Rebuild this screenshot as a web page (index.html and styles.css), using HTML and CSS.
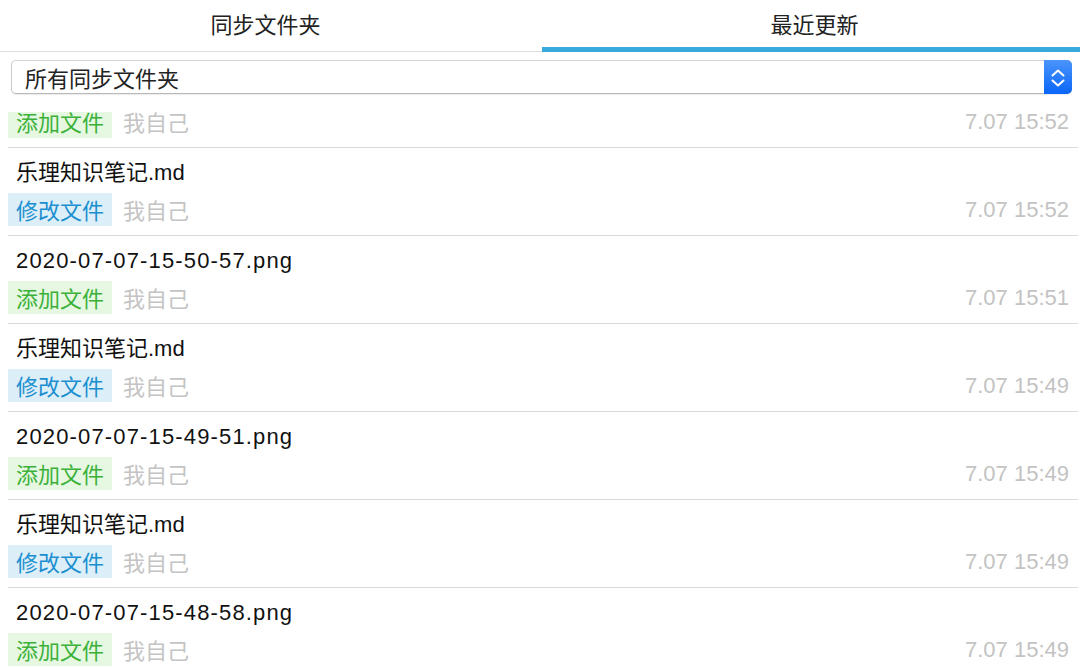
FILE: index.html
```html
<!DOCTYPE html>
<html lang="zh">
<head>
<meta charset="utf-8">
<title>最近更新</title>
<link rel="stylesheet" href="styles.css">
</head>
<body>
<div class="app">
  <div class="tabs">
    <div class="tab">同步文件夹</div>
    <div class="tab active">最近更新</div>
  </div>
  <div class="filter">
    <div class="select">
      <span class="select-label">所有同步文件夹</span>
      <span class="stepper">
        <svg width="28" height="33" viewBox="0 0 28 33">
          <path d="M8.5 14.5 L14 9.5 L19.5 14.5" fill="none" stroke="#fff" stroke-width="2" stroke-linecap="round" stroke-linejoin="round"/>
          <path d="M8.5 19.5 L14 24.5 L19.5 19.5" fill="none" stroke="#fff" stroke-width="2" stroke-linecap="round" stroke-linejoin="round"/>
        </svg>
      </span>
    </div>
  </div>
  <div class="list-viewport">
    <ul class="list">
      <li class="row">
        <div class="name latin">2020-07-07-15-52-10.png</div>
        <div class="meta"><span class="tag add">添加文件</span><span class="who">我自己</span><span class="time">7.07 15:52</span></div>
      </li>
      <li class="row">
        <div class="name">乐理知识笔记.md</div>
        <div class="meta"><span class="tag mod">修改文件</span><span class="who">我自己</span><span class="time">7.07 15:52</span></div>
      </li>
      <li class="row">
        <div class="name latin">2020-07-07-15-50-57.png</div>
        <div class="meta"><span class="tag add">添加文件</span><span class="who">我自己</span><span class="time">7.07 15:51</span></div>
      </li>
      <li class="row">
        <div class="name">乐理知识笔记.md</div>
        <div class="meta"><span class="tag mod">修改文件</span><span class="who">我自己</span><span class="time">7.07 15:49</span></div>
      </li>
      <li class="row">
        <div class="name latin">2020-07-07-15-49-51.png</div>
        <div class="meta"><span class="tag add">添加文件</span><span class="who">我自己</span><span class="time">7.07 15:49</span></div>
      </li>
      <li class="row">
        <div class="name">乐理知识笔记.md</div>
        <div class="meta"><span class="tag mod">修改文件</span><span class="who">我自己</span><span class="time">7.07 15:49</span></div>
      </li>
      <li class="row">
        <div class="name latin">2020-07-07-15-48-58.png</div>
        <div class="meta"><span class="tag add">添加文件</span><span class="who">我自己</span><span class="time">7.07 15:49</span></div>
      </li>
    </ul>
  </div>
</div>
</body>
</html>
```

FILE: styles.css
```css
* { box-sizing: border-box; }
html, body { margin: 0; padding: 0; background: #fff; }
body {
  font-family: "Liberation Sans", "Noto Sans CJK SC", sans-serif;
  color: #1a1a1a;
  width: 1080px;
  height: 667px;
  overflow: hidden;
}
.app { display: flex; flex-direction: column; height: 667px; }

.tab, .select-label, .tag, .who {
  font-family: "Noto Sans CJK SC", "Liberation Sans", sans-serif;
}

.tabs {
  display: grid;
  grid-template-columns: 542px 1fr;
  height: 52px;
  flex: none;
}
.tab {
  display: flex;
  align-items: center;
  justify-content: center;
  font-size: 22px;
  line-height: 30px;
  color: #222;
  padding-bottom: 6px;
  padding-right: 11px;
  border-bottom: 1px solid #dedede;
}
.tab.active {
  border-bottom: 5px solid #37a9da;
  padding-bottom: 2px;
  padding-right: 0;
  padding-left: 7px;
}

.filter { flex: none; padding: 8px 8px 18px 11px; height: 60px; }
.select {
  display: flex;
  align-items: stretch;
  height: 34px;
  border: 1px solid #cbcbcb;
  border-top-color: #d6d6d6;
  border-bottom-color: #b9b9b9;
  border-radius: 5px;
  background: #fff;
  box-shadow: 0 0.5px 1px rgba(0,0,0,0.08);
}
.select-label {
  flex: 1;
  display: flex;
  align-items: center;
  padding-left: 13px;
  font-size: 22px;
  line-height: 32px;
  color: #222;
}
.stepper {
  flex: none;
  width: 28px;
  margin: -1px -1px -1px 0;
  border-radius: 0 5px 5px 0;
  background: linear-gradient(#4a94fb, #0a66f8);
  display: flex;
  align-items: center;
  justify-content: center;
}
.stepper svg { display: block; }

.list-viewport { flex: 1; overflow: hidden; }
.list { list-style: none; margin: -52px 2px 0 8px; padding: 0; }
.row {
  height: 88px;
  padding: 10px 0 9px;
  border-bottom: 1px solid #dadada;
  display: flex;
  flex-direction: column;
}
.name {
  height: 30px;
  line-height: 30px;
  padding-left: 8px;
  font-size: 22px;
  color: #111;
  margin-bottom: 5px;
}
.name.latin { letter-spacing: 1.15px; }
.meta { display: flex; align-items: center; height: 33px; line-height: 33px; }
.tag {
  height: 33px;
  line-height: 33px;
  padding: 0 8px;
  font-size: 22px;
}
.tag.add { background: #e6f8e1; color: #3bb13a; }
.tag.mod { background: #dceef8; color: #1b8fd0; }
.who { margin-left: 11px; font-size: 22px; color: #c4c4c4; }
.time { margin-left: auto; padding-right: 9px; font-size: 22px; color: #c3c3c3; }
```
